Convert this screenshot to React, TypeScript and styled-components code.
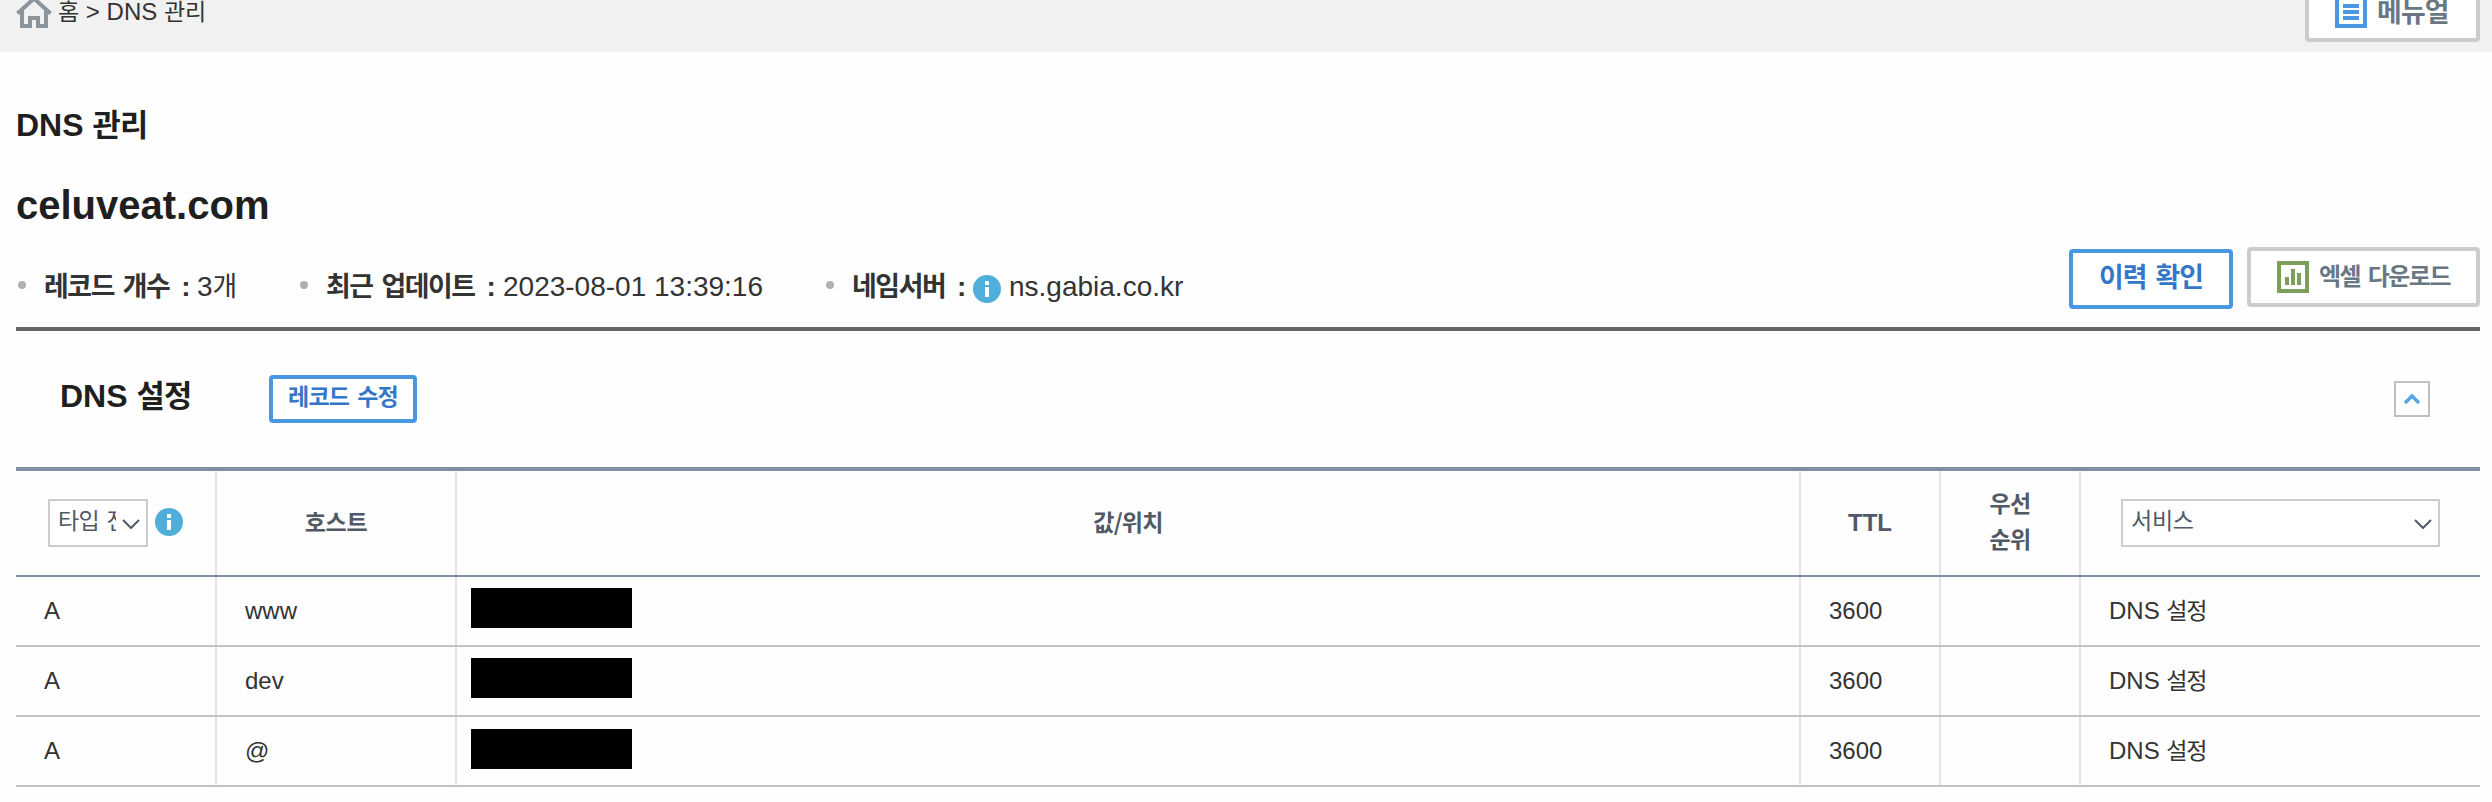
import React from "react";
import styled, { createGlobalStyle } from "styled-components";

const GlobalStyle = createGlobalStyle`
  * { box-sizing: border-box; }
  html, body { margin: 0; padding: 0; background: #fff; }
  body {
    font-family: "Liberation Sans", "Noto Sans CJK KR", sans-serif;
    color: #333;
    overflow: hidden;
  }
`;

const Page = styled.div`
  width: 2492px;
  height: 802px;
  background: #fefefe;
  overflow: hidden;
`;

const Ko = styled.span<{ $track?: number }>`
  font-family: "Noto Sans CJK KR", sans-serif;
  font-size: 0.96em;
  letter-spacing: ${(p) => p.$track ?? -0.8}px;
  word-spacing: 0.15em;
  line-height: 1px;
`;

const TopBar = styled.header`
  display: flex;
  justify-content: space-between;
  align-items: flex-start;
  height: 52px;
  padding: 0 12px 0 16px;
  background: #f1f1f1;
`;

const Crumbs = styled.nav`
  display: flex;
  align-items: flex-start;
  font-size: 24px;
  line-height: 24px;
  white-space: pre;

  svg { display: block; margin-right: 6px; }
`;

const Button = styled.button<{ $tone: "blue" | "grey"; $w: number; $h: number; $size: number }>`
  display: flex;
  align-items: center;
  justify-content: ${(p) => (p.$tone === "grey" ? "flex-start" : "center")};
  gap: 10px;
  width: ${(p) => p.$w}px;
  height: ${(p) => p.$h}px;
  padding: ${(p) => (p.$tone === "grey" ? "0 0 0 26px" : "0 0 8px")};
  border: 4px solid ${(p) => (p.$tone === "grey" ? "#cbccce" : "#4997e3")};
  border-radius: 4px;
  background: #fff;
  color: ${(p) => (p.$tone === "grey" ? "#697785" : "#3476c8")};
  font-family: inherit;
  font-size: ${(p) => p.$size}px;
  font-weight: 700;
  white-space: nowrap;

  svg { flex: none; }
`;

const ButtonText = styled(Ko)<{ $lift: number }>`
  margin-bottom: ${(p) => p.$lift}px;
`;

const ManualButton = styled(Button)`
  margin-top: -18px;
`;

const Main = styled.main`
  width: 2464px;
  margin-left: 16px;
`;

const Title = styled.h1`
  margin: 0;
  padding-top: 55px;
  font-size: 32px;
  line-height: 36px;
  color: #1f1f1f;
`;

const Domain = styled.h2`
  margin: 0;
  padding-top: 40px;
  font-size: 40px;
  line-height: 44px;
  color: #1f1f1f;
`;

const Summary = styled.section`
  display: flex;
  justify-content: space-between;
  height: 104px;
  border-bottom: 4px solid #666;
`;

const Facts = styled.ul`
  display: flex;
  margin: 0;
  padding: 43px 0 0;
  list-style: none;
  font-size: 28px;
  line-height: 34px;
`;

const Fact = styled.li<{ $w: number }>`
  display: flex;
  width: ${(p) => p.$w}px;
  white-space: pre;

  &::before {
    content: "";
    flex: none;
    width: 8px;
    height: 8px;
    margin: 11px 18px 0 2px;
    border-radius: 50%;
    background: #b0b0b0;
  }
  svg { display: block; flex: none; margin: 5px 8px 0 0; }
`;

const FactLabel = styled.strong<{ $w: number }>`
  flex: none;
  width: ${(p) => p.$w}px;

  ${Ko} { margin-right: 4px; }
`;

const Actions = styled.div`
  display: flex;
  align-items: flex-start;
  gap: 14px;
  padding-top: 20px;
`;

const HistoryButton = styled(Button)`
  margin-top: 2px;
`;

const SectionHead = styled.section`
  display: flex;
  align-items: flex-start;
  height: 136px;
  padding: 44px 50px 0 44px;
`;

const SectionTitle = styled.h3`
  width: 209px;
  margin: 3px 0 0;
  font-size: 32px;
  line-height: 36px;
  color: #1f1f1f;
`;

const Toggle = styled.button`
  display: flex;
  align-items: center;
  justify-content: center;
  width: 36px;
  height: 36px;
  margin: 6px 0 0 auto;
  padding: 0;
  border: 2px solid #c0c0c0;
  background: #fff;
`;

const columns = "201px 240px 1344px 140px 140px 399px";

const HeadRow = styled.div`
  display: grid;
  grid-template-columns: ${columns};
  height: 110px;
  border-top: 4px solid #808fa2;
  border-bottom: 2px solid #808fa2;
`;

const Row = styled.div`
  display: grid;
  grid-template-columns: ${columns};
  height: 70px;
  border-bottom: 2px solid #c3c3c3;
`;

const HeadCell = styled.div`
  display: flex;
  align-items: center;
  justify-content: center;
  border-right: 2px solid #e3e3e3;
  font-size: 24px;
  line-height: 36px;
  font-weight: 700;
  text-align: center;
  color: #505965;
  &:last-child { border-right: 0; }
`;

const HeadLabel = styled.div`
  display: flex;
  flex-direction: column;
  padding-bottom: 3px;
`;

const Cell = styled.div<{ $pad?: number }>`
  display: flex;
  align-items: center;
  padding: 0 0 1px ${(p) => p.$pad ?? 28}px;
  border-right: 2px solid #e3e3e3;
  font-size: 24px;
  white-space: pre;
  &:last-child { border-right: 0; }
`;

const Redacted = styled.div<{ $drop: number }>`
  align-self: flex-start;
  width: 161px;
  height: 40px;
  margin-top: ${(p) => p.$drop}px;
  background: #000;
`;

const Select = styled.div<{ $w: number }>`
  display: flex;
  align-items: center;
  justify-content: space-between;
  width: ${(p) => p.$w}px;
  height: 48px;
  padding: 0 6px 0 8px;
  border: 2px solid #ccc;
  background: #fff;
  font-weight: 400;

  svg { flex: none; margin-top: 1px; }
`;

const SelectText = styled.span<{ $w: number }>`
  width: ${(p) => p.$w}px;
  height: 36px;
  margin-top: -5px;
  overflow: hidden;
  white-space: nowrap;
  text-align: left;
`;

const TypeFilter = styled.div`
  display: flex;
  align-items: center;
  gap: 7px;

  > svg { margin-bottom: 2px; }
`;

const InfoIcon = () => (
  <svg width="28" height="28" viewBox="0 0 28 28">
    <circle cx="14" cy="14" r="14" fill="#50aedb" />
    <rect x="12" y="6" width="4" height="4" fill="#fff" />
    <rect x="12" y="12" width="4" height="10" fill="#fff" />
  </svg>
);

const HomeIcon = () => (
  <svg width="36" height="30" viewBox="0 0 36 30">
    <path
      d="M1.5 13.5 L18 -1.5 L34.5 13.5 M6 10 V26 H14 V18 H22 V26 H30 V10"
      fill="none"
      stroke="#8b949b"
      strokeWidth="4"
    />
  </svg>
);

const ListIcon = () => (
  <svg width="32" height="32" viewBox="0 0 32 32">
    <rect x="2" y="2" width="28" height="28" fill="#fff" stroke="#4997e3" strokeWidth="4" />
    <path d="M8 10H24M8 16H24M8 22H24" stroke="#4997e3" strokeWidth="4" />
  </svg>
);

const ChartIcon = () => (
  <svg width="32" height="32" viewBox="0 0 32 32">
    <rect x="2" y="2" width="28" height="28" fill="#fff" stroke="#7ba05b" strokeWidth="4" />
    <path d="M10 24V16M16 24V8M22 24V12" stroke="#7ba05b" strokeWidth="4" />
  </svg>
);

const DownIcon = () => (
  <svg width="18" height="10" viewBox="0 0 18 10">
    <path d="M1 1L9 9L17 1" fill="none" stroke="#505965" strokeWidth="2" />
  </svg>
);

const UpIcon = () => (
  <svg width="18" height="12" viewBox="0 0 18 12">
    <path d="M2 10L9 3L16 10" fill="none" stroke="#5ba2e8" strokeWidth="3.4" />
  </svg>
);

const records = [
  { type: "A", host: "www", ttl: "3600", drop: 11 },
  { type: "A", host: "dev", ttl: "3600", drop: 11 },
  { type: "A", host: "@", ttl: "3600", drop: 12 },
];

export default function App() {
  return (
    <Page>
      <GlobalStyle />
      <TopBar>
        <Crumbs>
          <HomeIcon />
          <span>
            <Ko $track={0}>홈</Ko> &gt; DNS <Ko $track={0}>관리</Ko>
          </span>
        </Crumbs>
        <ManualButton $tone="grey" $w={175} $h={60} $size={28}>
          <ListIcon />
          <ButtonText $lift={4}>메뉴얼</ButtonText>
        </ManualButton>
      </TopBar>
      <Main>
        <Title>
          DNS <Ko>관리</Ko>
        </Title>
        <Domain>celuveat.com</Domain>
        <Summary>
          <Facts>
            <Fact $w={282}>
              <FactLabel $w={153}>
                <Ko $track={-1.4}>레코드 개수</Ko> :
              </FactLabel>
              <span>
                3<Ko>개</Ko>
              </span>
            </Fact>
            <Fact $w={526}>
              <FactLabel $w={177}>
                <Ko $track={-1.4}>최근 업데이트</Ko> :
              </FactLabel>
              2023-08-01 13:39:16
            </Fact>
            <Fact $w={380}>
              <FactLabel $w={121}>
                <Ko $track={-1.4}>네임서버</Ko> :
              </FactLabel>
              <InfoIcon />
              ns.gabia.co.kr
            </Fact>
          </Facts>
          <Actions>
            <HistoryButton $tone="blue" $w={164} $h={60} $size={28}>
              <Ko $track={-1}>이력 확인</Ko>
            </HistoryButton>
            <Button $tone="grey" $w={233} $h={60} $size={25}>
              <ChartIcon />
              <ButtonText $lift={6} $track={-1.5}>
                엑셀 다운로드
              </ButtonText>
            </Button>
          </Actions>
        </Summary>
        <SectionHead>
          <SectionTitle>
            DNS <Ko>설정</Ko>
          </SectionTitle>
          <Button $tone="blue" $w={148} $h={48} $size={24}>
            <Ko>레코드 수정</Ko>
          </Button>
          <Toggle aria-label="접기">
            <UpIcon />
          </Toggle>
        </SectionHead>
        <HeadRow>
          <HeadCell>
            <TypeFilter>
              <Select $w={100}>
                <SelectText $w={58}>
                  <Ko>타입 전체</Ko>
                </SelectText>
                <DownIcon />
              </Select>
              <InfoIcon />
            </TypeFilter>
          </HeadCell>
          <HeadCell>
            <HeadLabel>
              <Ko $track={-0.3}>호스트</Ko>
            </HeadLabel>
          </HeadCell>
          <HeadCell>
            <HeadLabel>
              <Ko>값/위치</Ko>
            </HeadLabel>
          </HeadCell>
          <HeadCell>TTL</HeadCell>
          <HeadCell>
            <HeadLabel>
              <span>
                <Ko>우선</Ko>
              </span>
              <span>
                <Ko>순위</Ko>
              </span>
            </HeadLabel>
          </HeadCell>
          <HeadCell>
            <Select $w={319}>
              <SelectText $w={200}>
                <Ko $track={-0.3}>서비스</Ko>
              </SelectText>
              <DownIcon />
            </Select>
          </HeadCell>
        </HeadRow>
        {records.map((r) => (
          <Row key={r.host}>
            <Cell>{r.type}</Cell>
            <Cell>{r.host}</Cell>
            <Cell $pad={14}>
              <Redacted $drop={r.drop} />
            </Cell>
            <Cell>{r.ttl}</Cell>
            <Cell />
            <Cell>
              <span>
                DNS <Ko $track={-1.2}>설정</Ko>
              </span>
            </Cell>
          </Row>
        ))}
      </Main>
    </Page>
  );
}
